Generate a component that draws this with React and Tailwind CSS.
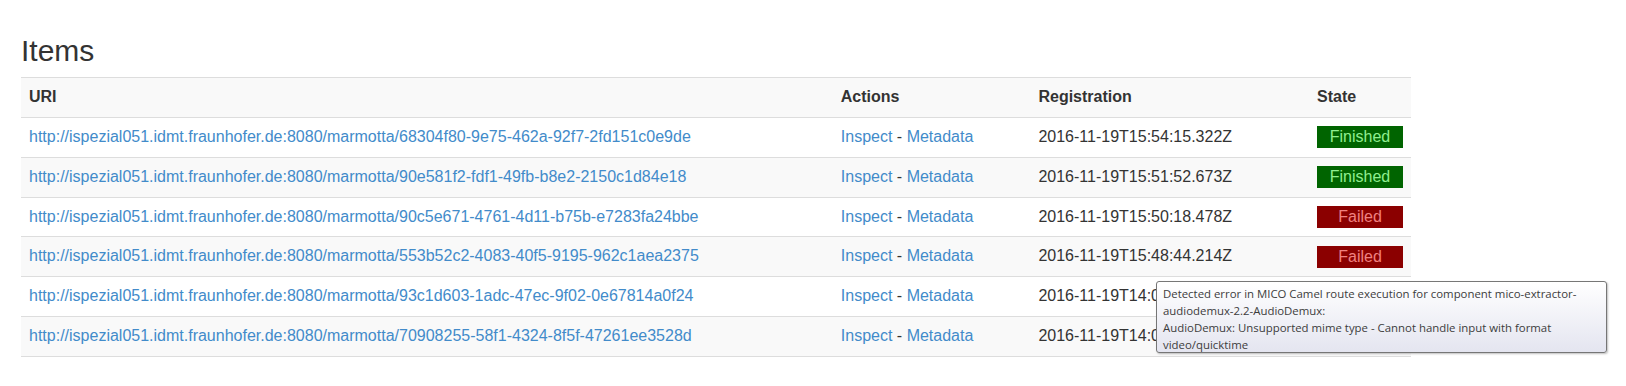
import React from "react";

const BASE = "http://ispezial051.idmt.fraunhofer.de:8080/marmotta/";

const items = [
  { id: "68304f80-9e75-462a-92f7-2fd151c0e9de", date: "2016-11-19T15:54:15.322Z", state: "Finished" },
  { id: "90e581f2-fdf1-49fb-b8e2-2150c1d84e18", date: "2016-11-19T15:51:52.673Z", state: "Finished" },
  { id: "90c5e671-4761-4d11-b75b-e7283fa24bbe", date: "2016-11-19T15:50:18.478Z", state: "Failed" },
  { id: "553b52c2-4083-40f5-9195-962c1aea2375", date: "2016-11-19T15:48:44.214Z", state: "Failed" },
  { id: "93c1d603-1adc-47ec-9f02-0e67814a0f24", date: "2016-11-19T14:08:31.905Z", state: "Failed" },
  { id: "70908255-58f1-4324-8f5f-47261ee3528d", date: "2016-11-19T14:05:12.117Z", state: "Failed" },
];

function StateBadge({ state }) {
  const ok = state === "Finished";
  return (
    <div
      className={
        "w-[86px] h-[22px] flex items-center justify-center leading-none " +
        (ok ? "bg-[#006400] text-[#90ee90]" : "bg-[#8b0000] text-[#f08080]")
      }
    >
      {state}
    </div>
  );
}

export default function App() {
  return (
    <div className="min-h-screen bg-white text-[#333] text-[16px] font-['Liberation_Sans',Arial,sans-serif]">
      <div className="relative pl-[21px] pt-[34px]">
        <h2 className="text-[30px] leading-[33px] mb-[10px]">Items</h2>

        <table className="w-[1390px] border-collapse leading-[22.86px]">
          <thead>
            <tr className="bg-[#f9f9f9] border-t border-b border-[#ddd]">
              <th className="text-left font-bold px-[8px] py-[8px] w-[813px]">URI</th>
              <th className="text-left font-bold px-[8px] py-[8px] w-[198px]">Actions</th>
              <th className="text-left font-bold px-[8px] py-[8px] w-[279px]">Registration</th>
              <th className="text-left font-bold px-[8px] py-[8px]">State</th>
            </tr>
          </thead>
          <tbody>
            {items.map((item, i) => (
              <tr
                key={item.id}
                className={"border-b border-[#ddd] " + (i % 2 === 1 ? "bg-[#f9f9f9]" : "bg-white")}
              >
                <td className="px-[8px] py-[8px]">
                  <a href="#" className="text-[#428bca]">{BASE + item.id}</a>
                </td>
                <td className="px-[8px] py-[8px]">
                  <a href="#" className="text-[#428bca]">Inspect</a>
                  {" - "}
                  <a href="#" className="text-[#428bca]">Metadata</a>
                </td>
                <td className="px-[8px] py-[8px]">{item.date}</td>
                <td className="px-[8px] py-[8px]">
                  <StateBadge state={item.state} />
                </td>
              </tr>
            ))}
          </tbody>
        </table>

        {/* native title tooltip hovering over the failed row */}
        <div className="absolute left-[1156px] top-[281px] w-[451px] h-[72px] rounded-[3px] border border-[#767676] bg-gradient-to-b from-white to-[#e4e5f0] shadow-[1px_1px_2px_rgba(0,0,0,0.25)] px-[6px] pt-[3px] text-[11.4px] leading-[17px] text-[#3c3c3c] font-['Open_Sans','Noto_Sans',sans-serif] whitespace-nowrap">
          Detected error in MICO Camel route execution for component mico-extractor-
          <br />
          audiodemux-2.2-AudioDemux:
          <br />
          AudioDemux: Unsupported mime type - Cannot handle input with format
          <br />
          video/quicktime
        </div>
      </div>
    </div>
  );
}
